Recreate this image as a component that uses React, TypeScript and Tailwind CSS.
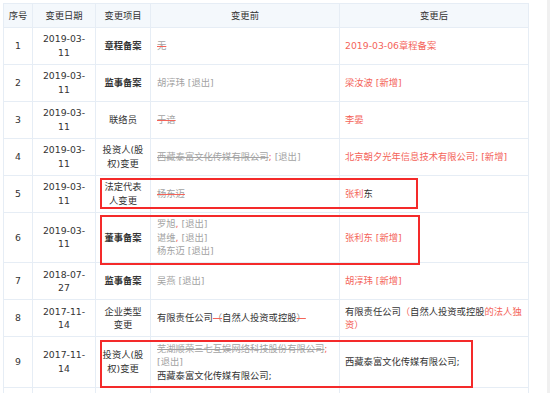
import React from 'react';

const red = 'text-[#f4645a]';
const gray = 'text-[#a3a3a3]';

type Row = {
  no: string;
  date: [string, string];
  item: React.ReactNode;
  bold?: boolean;
  before: React.ReactNode;
  after: React.ReactNode;
};

const Del: React.FC<{ children: React.ReactNode; redLine?: boolean }> = ({ children, redLine }) => (
  <span className={`line-through ${redLine ? 'decoration-[#f4645a]' : 'decoration-[#a3a3a3]'}`}>{children}</span>
);

const rows: Row[] = [
  {
    no: '1',
    date: ['2019-03-', '11'],
    item: '章程备案',
    bold: true,
    before: <span className={gray}><Del redLine>无</Del></span>,
    after: <span className={red}>2019-03-06章程备案</span>,
  },
  {
    no: '2',
    date: ['2019-03-', '11'],
    item: '监事备案',
    bold: true,
    before: <span className={gray}>胡淳玮 [退出]</span>,
    after: <span className={red}>梁汝波 [新增]</span>,
  },
  {
    no: '3',
    date: ['2019-03-', '11'],
    item: '联络员',
    before: <span className={gray}><Del redLine>于谙</Del></span>,
    after: <span className={red}>李晏</span>,
  },
  {
    no: '4',
    date: ['2019-03-', '11'],
    item: <>投资人(股<br />权)变更</>,
    before: (
      <span className={gray}>
        <Del>西藏泰富文化传媒有限公司</Del>
        <span className={red}>;</span> [退出]
      </span>
    ),
    after: <span className={red}>北京朝夕光年信息技术有限公司; [新增]</span>,
  },
  {
    no: '5',
    date: ['2019-03-', '11'],
    item: <>法定代表<br />人变更</>,
    before: <span className={gray}><Del redLine>杨东迈</Del></span>,
    after: (
      <>
        <span className={red}>张利</span>
        <span>东</span>
      </>
    ),
  },
  {
    no: '6',
    date: ['2019-03-', '11'],
    item: '董事备案',
    bold: true,
    before: (
      <span className={gray}>
        罗旭<span className={red}>,</span> [退出]
        <br />
        谌维<span className={red}>,</span> [退出]
        <br />
        杨东迈 [退出]
      </span>
    ),
    after: <span className={red}>张利东 [新增]</span>,
  },
  {
    no: '7',
    date: ['2018-07-', '27'],
    item: '监事备案',
    bold: true,
    before: <span className={gray}>吴燕 [退出]</span>,
    after: <span className={red}>胡淳玮 [新增]</span>,
  },
  {
    no: '8',
    date: ['2017-11-', '14'],
    item: <>企业类型<br />变更</>,
    before: (
      <>
        有限责任公司<span className="line-through decoration-[#f4645a] text-[#888]">（</span>
        自然人投资或控股
        <span className="line-through decoration-[#f4645a] text-[#888]">）</span>
      </>
    ),
    after: (
      <>
        有限责任公司<span className={red}>（</span>自然人投资或控股<span className={red}>的法人独</span>
        <br />
        <span className={red}>资）</span>
      </>
    ),
  },
  {
    no: '9',
    date: ['2017-11-', '14'],
    item: <>投资人(股<br />权)变更</>,
    before: (
      <>
        <span className={gray}>
          <Del>芜湖顺荣三七互娱网络科技股份有限公司</Del>
          <span className={red}>;</span>
          <br />
          [退出]
        </span>
        <br />
        西藏泰富文化传媒有限公司;
      </>
    ),
    after: <>西藏泰富文化传媒有限公司;</>,
  },
];

const cell = 'border border-[#e6edf5] py-[4.5px] align-middle';

export default function App() {
  return (
    <div
      className="flex h-[393px] w-[550px] overflow-hidden bg-white text-[9.3px] leading-[13.5px] text-[#333]"
      style={{ fontFamily: '"DejaVu Sans", "Noto Sans CJK SC", sans-serif' }}
    >
      <div className="relative ml-[3px] mt-[3px] w-[525px] shrink-0">
        <table className="w-[525px] table-fixed border-collapse">
          <colgroup>
            <col className="w-[29px]" />
            <col className="w-[63px]" />
            <col className="w-[55px]" />
            <col className="w-[189px]" />
            <col className="w-[189px]" />
          </colgroup>
          <thead>
            <tr className="bg-[#f4f8fc]">
              <th className={`${cell} font-normal text-center`}>序号</th>
              <th className={`${cell} font-normal text-center`}>变更日期</th>
              <th className={`${cell} font-normal text-center`}>变更项目</th>
              <th className={`${cell} font-normal text-center`}>变更前</th>
              <th className={`${cell} font-normal text-center`}>变更后</th>
            </tr>
          </thead>
          <tbody>
            {rows.map((r) => (
              <tr key={r.no}>
                <td className={`${cell} text-center`}>{r.no}</td>
                <td className={`${cell} text-center`}>
                  {r.date[0]}
                  <br />
                  {r.date[1]}
                </td>
                <td className={`${cell} text-center ${r.bold ? 'font-semibold' : ''}`}>{r.item}</td>
                <td className={`${cell} pl-[6px] text-left`}>{r.before}</td>
                <td className={`${cell} pl-[5px] text-left`}>{r.after}</td>
              </tr>
            ))}
            <tr className="h-[37px]">
              <td className={cell}></td>
              <td className={cell}></td>
              <td className={cell}></td>
              <td className={cell}></td>
              <td className={cell}></td>
            </tr>
          </tbody>
        </table>

        {/* red highlight boxes */}
        <div className="pointer-events-none absolute left-[97px] top-[175px] h-[31px] w-[318px] border-2 border-[#f42a2a]" />
        <div className="pointer-events-none absolute left-[97px] top-[212px] h-[50px] w-[320px] border-2 border-[#f42a2a]" />
        <div className="pointer-events-none absolute left-[97px] top-[337px] h-[48px] w-[373px] border-2 border-[#f42a2a]" />
      </div>
      <div className="flex-1" />
      <div className="h-full w-[3px] bg-[#f0f0f0]" />
    </div>
  );
}
